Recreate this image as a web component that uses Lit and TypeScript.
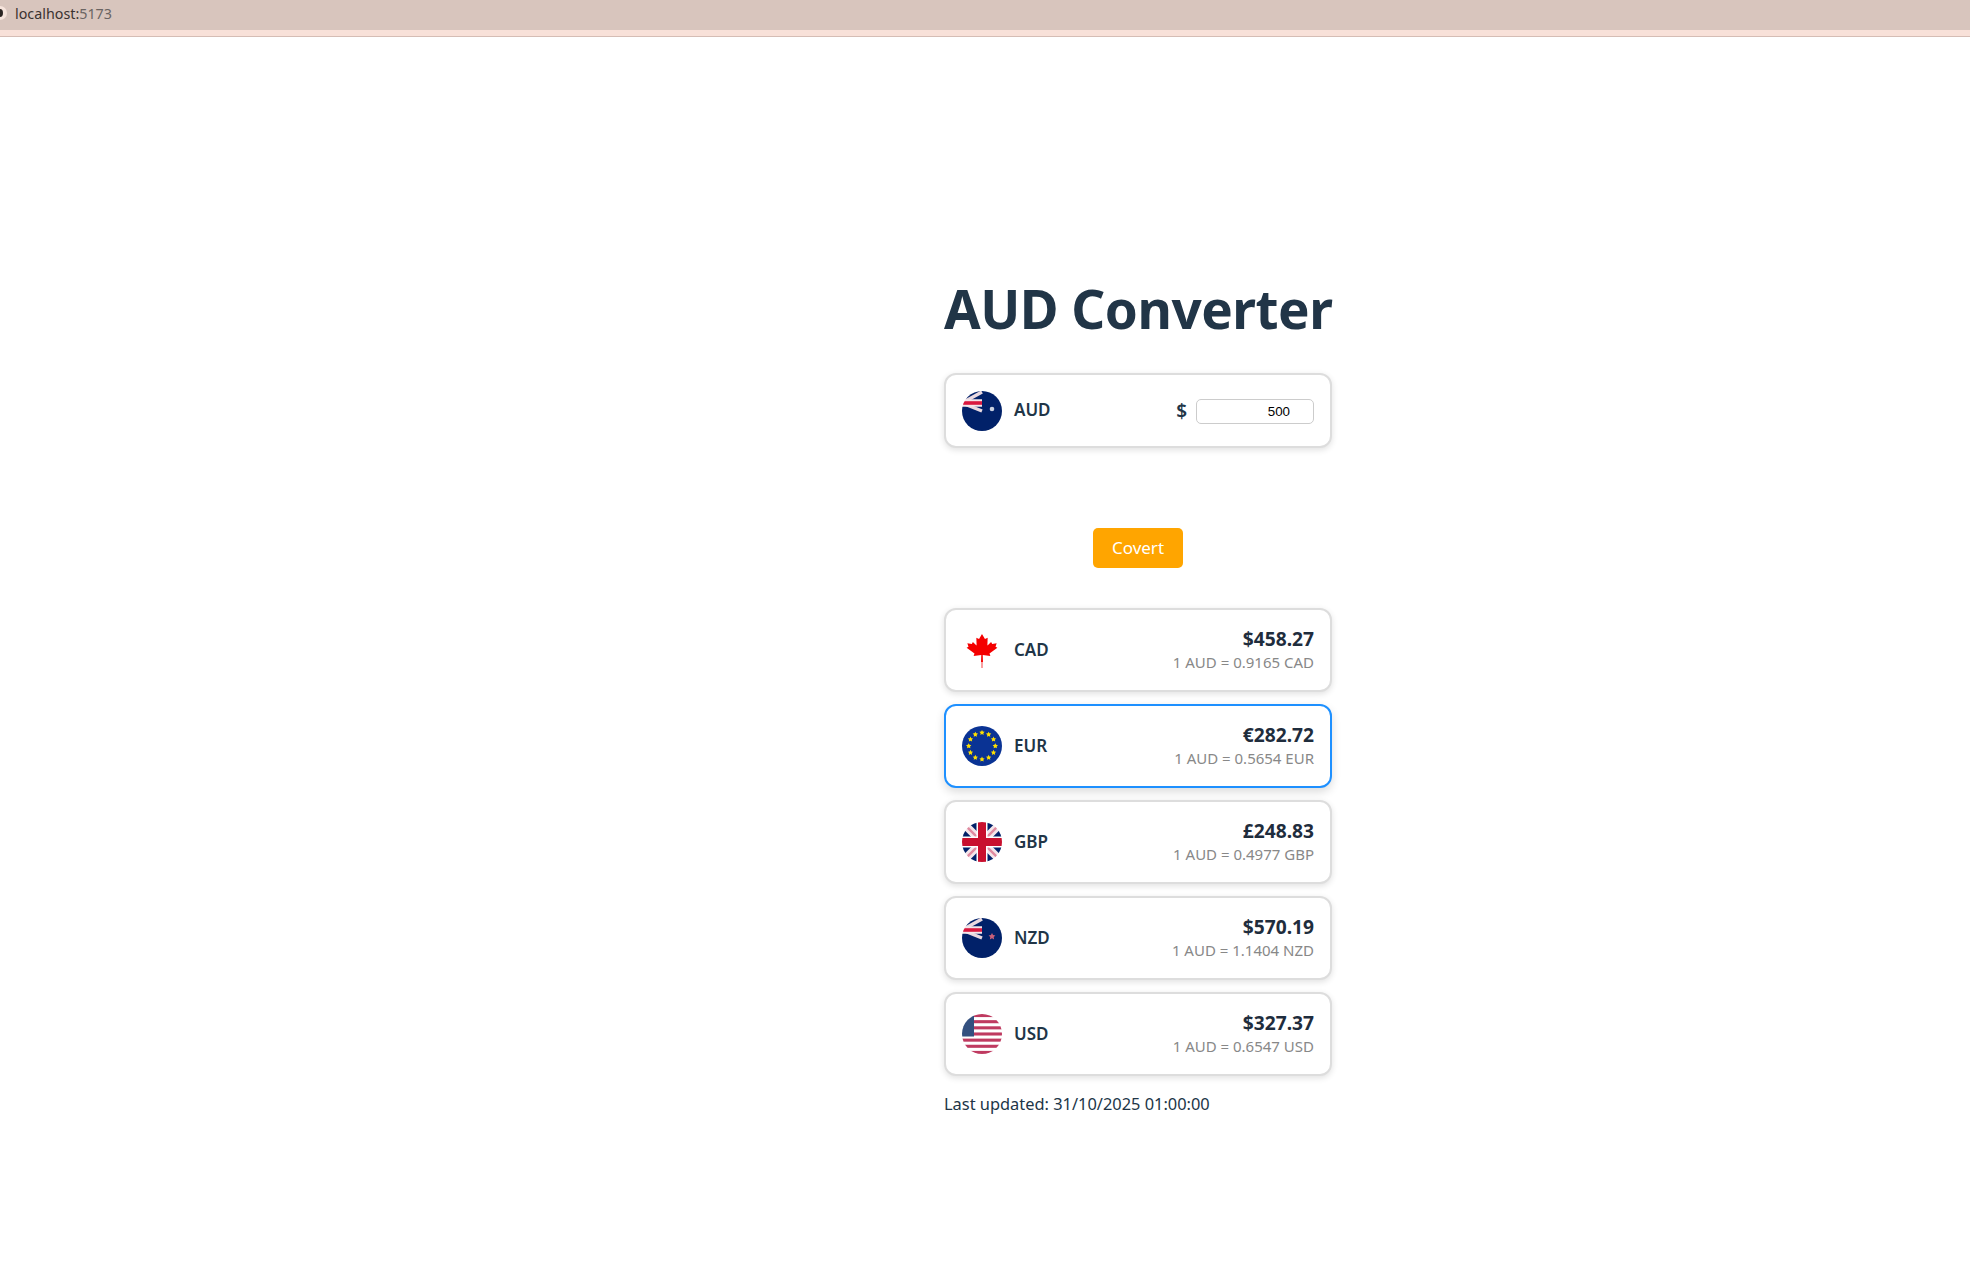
import { LitElement, css, html, svg } from "lit";
import { customElement, property } from "lit/decorators.js";

const star = (cx: number, cy: number, r: number, fill: string) => {
  const pts: string[] = [];
  for (let i = 0; i < 10; i++) {
    const rad = i % 2 ? r * 0.5 : r;
    const a = (Math.PI / 5) * i - Math.PI / 2;
    pts.push(`${(cx + rad * Math.cos(a)).toFixed(2)},${(cy + rad * Math.sin(a)).toFixed(2)}`);
  }
  return svg`<polygon points=${pts.join(" ")} fill=${fill} />`;
};

// the small union jack in the corner of the AUD and NZD flags, it reads as a
// pale fan with one red band at this size
const canton = svg`
  <path d="M0 12 20 1M0 12 20 20" stroke="#e9d9e0" stroke-width="3.4" />
  <path d="M0 4 12 0" stroke="#d98aa0" stroke-width="2" />
  <path d="M0 12H20" stroke="#f3e6ea" stroke-width="7.5" />
  <path d="M0 12H20" stroke="#d9183f" stroke-width="3.6" />
`;

const flags: Record<string, unknown> = {
  AUD: svg`
    <rect width="40" height="40" fill="#012169" />
    ${canton}
    <circle cx="30" cy="18" r="2.3" fill="#c9d0e0" />
  `,
  NZD: svg`
    <rect width="40" height="40" fill="#012169" />
    ${canton}
    ${star(30, 18.5, 3.6, "#c8607a")}
  `,
  CAD: svg`
    <rect width="40" height="40" fill="#fff" />
    <rect x="19" y="30" width="2" height="8" fill="#f9a0a0" />
    <path transform="translate(-4.6 -2.6) scale(1.23 1.1)" d="M19.2 31.5h1.6l-.2-6.3 6.2.8-.7-2.3 6.4-5.3-1.5-.7.9-3.4-3.6.7-.9-1.7-2.9 3.1-.1-.9.2-6.2-2.2 1.2L20 6l-2.4 4.5-2.2-1.2.2 6.2-.1.9-2.9-3.1-.9 1.7-3.6-.7.9 3.4-1.5.7 6.4 5.3-.7 2.3 6.2-.8z" fill="#f40000" />
  `,
  EUR: svg`
    <rect width="40" height="40" fill="#0a3394" />
    ${Array.from({ length: 12 }, (_, i) => {
      const a = (Math.PI / 6) * i;
      return star(20 + 13.3 * Math.sin(a), 20 - 13.3 * Math.cos(a), 2.8, "#ffe000");
    })}
  `,
  GBP: svg`
    <rect width="40" height="40" fill="#012169" />
    <path d="M0 0 40 40M40 0 0 40" stroke="#f4e6ea" stroke-width="8" />
    <path d="M0 0 40 40M40 0 0 40" stroke="#e08aa0" stroke-width="2.4" />
    <path d="M20 0V40M0 20H40" stroke="#fff" stroke-width="11" />
    <path d="M20 0V40M0 20H40" stroke="#c8102e" stroke-width="8" />
  `,
  USD: svg`
    <rect width="40" height="40" fill="#fff" />
    ${[0, 1, 2, 3, 4, 5, 6].map(
      (i) => svg`<rect y=${i * 6.15} width="40" height="3.08" fill="#bf3a60" />`,
    )}
    <rect width="12" height="22.5" fill="#33507f" />
  `,
};

const quotes = [
  { code: "CAD", amount: "$458.27", rate: "1 AUD = 0.9165 CAD" },
  { code: "EUR", amount: "€282.72", rate: "1 AUD = 0.5654 EUR", active: true },
  { code: "GBP", amount: "£248.83", rate: "1 AUD = 0.4977 GBP" },
  { code: "NZD", amount: "$570.19", rate: "1 AUD = 1.1404 NZD" },
  { code: "USD", amount: "$327.37", rate: "1 AUD = 0.6547 USD" },
];

@customElement("currency-flag")
export class CurrencyFlag extends LitElement {
  @property() code = "AUD";

  static styles = css`
    :host {
      display: block;
      width: 40px;
      height: 40px;
      flex: none;
      border-radius: 50%;
      overflow: hidden;
    }

    svg {
      display: block;
      width: 40px;
      height: 40px;
      filter: blur(0.7px);
    }
  `;

  render() {
    return html`<svg viewBox="0 0 40 40">${flags[this.code]}</svg>`;
  }
}

@customElement("app-root")
export class AppRoot extends LitElement {
  static styles = css`
    :host {
      display: block;
      min-height: 1280px;
      background: #fff;
      color: #213547;
      font-family: "Noto Sans", "Open Sans", sans-serif;
    }

    .tab {
      display: flex;
      align-items: center;
      box-sizing: border-box;
      height: 30px;
      padding-bottom: 4px;
      background: #d8c5bd;
      font-size: 14.3px;
      color: #3a3230;
    }

    .tab .dot {
      width: 14px;
      height: 14px;
      margin: 0 8px 0 -7px;
      border-radius: 50%;
      background: #f6e4dc;
      display: flex;
      align-items: center;
      justify-content: center;
    }

    .tab .dot::after {
      content: "";
      width: 6px;
      height: 8px;
      border-radius: 50%;
      background: #2b2523;
    }

    .tab .port {
      color: #6a6462;
    }

    .strip {
      height: 6px;
      background: #f8e1d9;
      border-bottom: 1px solid #d5bdb5;
    }

    main {
      width: 388px;
      margin-left: 944px;
      padding-top: 235px;
    }

    h1 {
      margin: 0 0 27px;
      font-size: 53px;
      line-height: 74px;
      font-weight: 700;
      letter-spacing: -0.5px;
      white-space: nowrap;
      text-align: center;
    }

    .card {
      display: flex;
      align-items: center;
      box-sizing: border-box;
      width: 388px;
      height: 84px;
      margin-top: 12px;
      padding: 0 16px;
      background: #fff;
      border: 2px solid #ddd;
      border-radius: 12px;
      box-shadow: 0 2px 6px rgba(0, 0, 0, 0.12);
    }

    .card.source {
      height: 75px;
      margin-top: 0;
    }

    .card.active {
      border-color: #1e90ff;
      box-shadow: 0 4px 10px rgba(0, 0, 0, 0.14);
    }

    .code {
      margin-left: 12px;
      padding-bottom: 2px;
      font-size: 17px;
      font-weight: 600;
    }

    .right {
      margin-left: auto;
      text-align: right;
    }

    .amount {
      font-size: 19.2px;
      line-height: 24px;
      font-weight: 700;
      color: #1f2d3d;
    }

    .rate {
      font-size: 15px;
      line-height: 22px;
      color: #888;
    }

    .entry {
      display: flex;
      align-items: center;
      gap: 9px;
      margin-left: auto;
      font-size: 19px;
      font-weight: 600;
    }

    input {
      box-sizing: border-box;
      width: 118px;
      height: 25px;
      margin-top: 1px;
      padding: 1px 23px 0 0;
      border: 1px solid #ccc;
      border-radius: 5px;
      background: #fff;
      color: #000;
      text-align: right;
      font: 13.33px "Liberation Sans", sans-serif;
      outline: none;
    }

    .action {
      display: flex;
      justify-content: center;
      padding: 80px 0 28px;
    }

    button {
      width: 90px;
      height: 40px;
      padding: 0 0 2px;
      border: none;
      border-radius: 5px;
      background: #ffa500;
      color: #fff;
      font: 17px "Noto Sans", sans-serif;
    }

    .updated {
      margin: 16px 0 0;
      font-size: 16.4px;
      line-height: 24px;
      white-space: nowrap;
    }
  `;

  render() {
    return html`
      <div class="tab">
        <span class="dot"></span>
        <span>localhost:<span class="port">5173</span></span>
      </div>
      <div class="strip"></div>
      <main>
        <h1>AUD Converter</h1>
        <div class="card source">
          <currency-flag code="AUD"></currency-flag>
          <span class="code">AUD</span>
          <div class="entry">
            <span>$</span>
            <input type="text" .value=${"500"} />
          </div>
        </div>
        <div class="action"><button>Covert</button></div>
        ${quotes.map(
          (q) => html`
            <div class="card ${q.active ? "active" : ""}">
              <currency-flag code=${q.code}></currency-flag>
              <span class="code">${q.code}</span>
              <div class="right">
                <div class="amount">${q.amount}</div>
                <div class="rate">${q.rate}</div>
              </div>
            </div>
          `,
        )}
        <p class="updated">Last updated: 31/10/2025 01:00:00</p>
      </main>
    `;
  }
}
